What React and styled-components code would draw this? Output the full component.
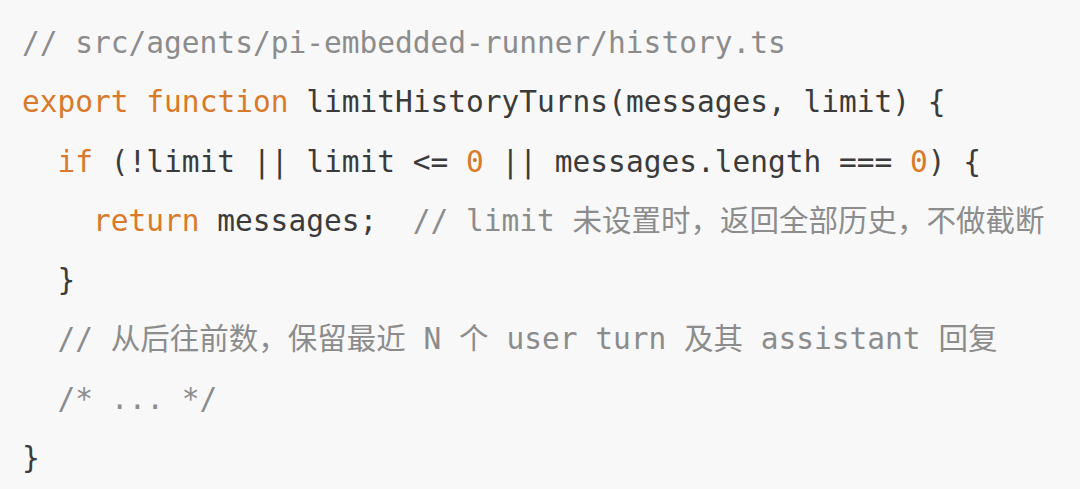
import React from "react";
import styled, { createGlobalStyle } from "styled-components";

const GlobalStyle = createGlobalStyle`
  html, body {
    margin: 0;
    padding: 0;
    background: #f8f8f8;
  }
`;

const colors = {
  kw: "#d97a2b",
  num: "#d97a2b",
  plain: "#3b3b3b",
  comment: "#8c8c8c",
};

const Block = styled.div`
  width: 1080px;
  height: 489px;
  box-sizing: border-box;
  padding: 14px 0 0 22px;
  background: #f8f8f8;
  font-family: "DejaVu Sans Mono", "Liberation Mono", "Noto Sans CJK SC", monospace;
  font-size: 29.5px;
  line-height: 59.3px;
  overflow: hidden;
`;

const Line = styled.div`
  white-space: pre;
  height: 59.3px;
  padding-left: ${(p) => p.$indent * 17.75}px;
  color: ${colors.plain};
`;

const Tok = styled.span`
  color: ${(p) => colors[p.$kind] || colors.plain};
`;

const Cjk = styled.span`
  font-family: "Noto Sans CJK SC", sans-serif;
  line-height: 1;
`;

export default function App() {
  return (
    <>
      <GlobalStyle />
      <Block>
        <Line $indent={0}>
          <Tok $kind="comment">// src/agents/pi-embedded-runner/history.ts</Tok>
        </Line>
        <Line $indent={0}>
          <Tok $kind="kw">export</Tok> <Tok $kind="kw">function</Tok> limitHistoryTurns(messages, limit) {"{"}
        </Line>
        <Line $indent={2}>
          <Tok $kind="kw">if</Tok> (!limit || limit {"<="} <Tok $kind="num">0</Tok> || messages.length === <Tok $kind="num">0</Tok>) {"{"}
        </Line>
        <Line $indent={4}>
          <Tok $kind="kw">return</Tok> messages;{"  "}
          <Tok $kind="comment">
            // limit <Cjk>未设置时，返回全部历史，不做截断</Cjk>
          </Tok>
        </Line>
        <Line $indent={2}>{"}"}</Line>
        <Line $indent={2}>
          <Tok $kind="comment">
            // <Cjk>从后往前数，保留最近</Cjk> N <Cjk>个</Cjk> user turn <Cjk>及其</Cjk> assistant <Cjk>回复</Cjk>
          </Tok>
        </Line>
        <Line $indent={2}>
          <Tok $kind="comment">/* ... */</Tok>
        </Line>
        <Line $indent={0}>{"}"}</Line>
      </Block>
    </>
  );
}
